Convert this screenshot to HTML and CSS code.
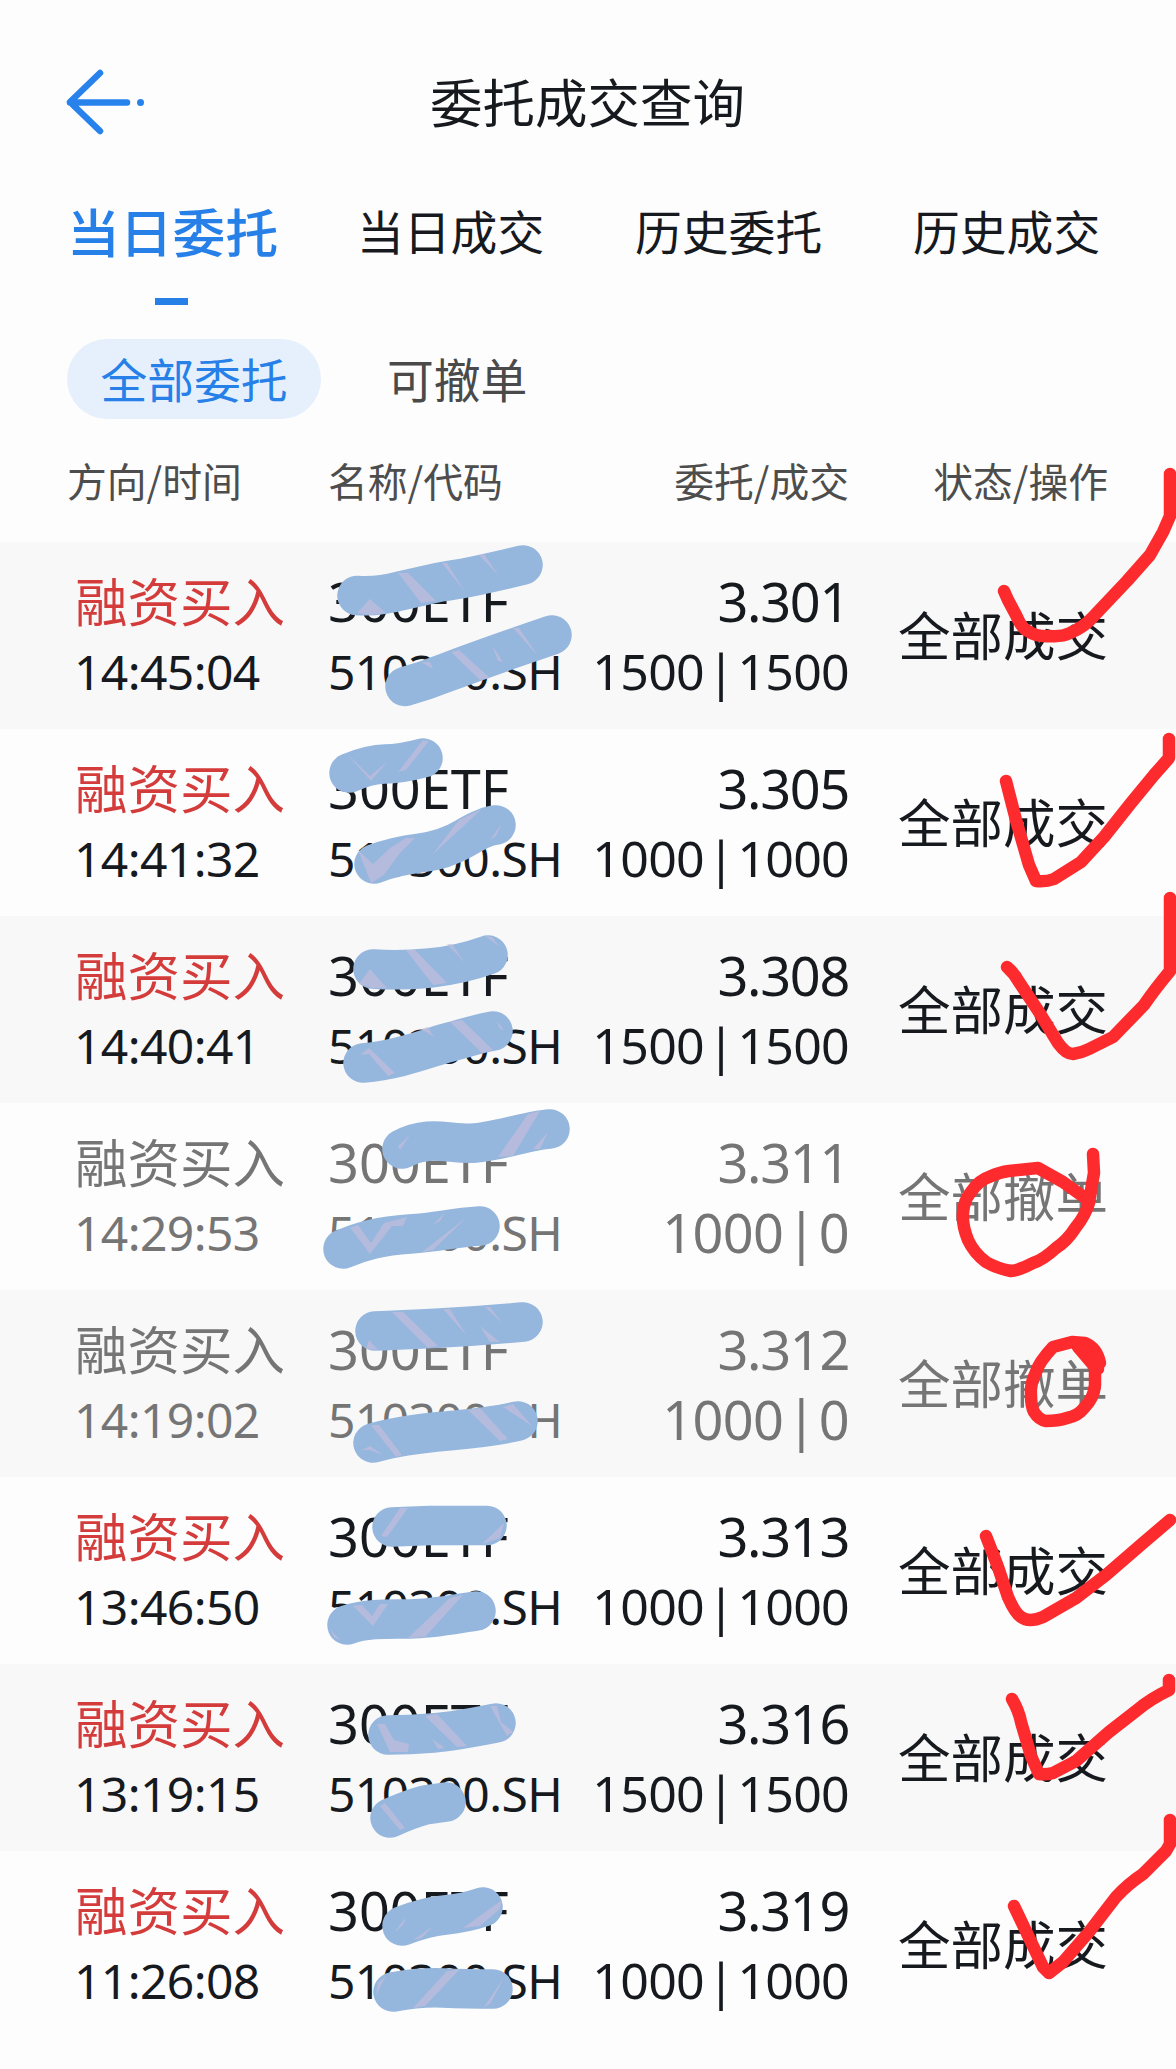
FILE: index.html
```html
<!DOCTYPE html>
<html lang="zh-CN">
<head>
<meta charset="utf-8">
<title>委托成交查询</title>
<link rel="stylesheet" href="styles.css">
</head>
<body>
<div class="screen">
  <header class="topbar">
    <svg class="back" width="84" height="72" viewBox="0 0 84 72">
      <path d="M38 7 8 36l30 29M8 36.500h57" fill="none" stroke="#2882ec" stroke-width="6.500" stroke-linecap="round" stroke-linejoin="round"/>
      <circle cx="78.500" cy="36.500" r="3.500" fill="#2882ec"/>
    </svg>
    <h1 class="title">委托成交查询</h1>
  </header>
  <nav class="tabs">
    <span class="tab active">当日委托</span>
    <span class="tab">当日成交</span>
    <span class="tab">历史委托</span>
    <span class="tab">历史成交</span>
  </nav>
  <div class="filters">
    <span class="pill">全部委托</span>
    <span class="filter">可撤单</span>
  </div>
  <div class="cols head">
    <span>方向/时间</span><span>名称/代码</span><span class="right">委托/成交</span><span class="right">状态/操作</span>
  </div>
  <main class="list">
    <section class="cols row">
      <div><div class="side">融资买入</div><div class="time">14:45:04</div></div>
      <div><div class="name">300ETF</div><div class="code">510300.SH</div></div>
      <div class="right"><div class="price">3.301</div><div class="qty">1500 | 1500</div></div>
      <div class="status">全部成交</div>
    </section>
    <section class="cols row">
      <div><div class="side">融资买入</div><div class="time">14:41:32</div></div>
      <div><div class="name">300ETF</div><div class="code">510300.SH</div></div>
      <div class="right"><div class="price">3.305</div><div class="qty">1000 | 1000</div></div>
      <div class="status">全部成交</div>
    </section>
    <section class="cols row">
      <div><div class="side">融资买入</div><div class="time">14:40:41</div></div>
      <div><div class="name">300ETF</div><div class="code">510300.SH</div></div>
      <div class="right"><div class="price">3.308</div><div class="qty">1500 | 1500</div></div>
      <div class="status">全部成交</div>
    </section>
    <section class="cols row cancelled">
      <div><div class="side">融资买入</div><div class="time">14:29:53</div></div>
      <div><div class="name">300ETF</div><div class="code">510300.SH</div></div>
      <div class="right"><div class="price">3.311</div><div class="qty">1000 | 0</div></div>
      <div class="status">全部撤单</div>
    </section>
    <section class="cols row cancelled">
      <div><div class="side">融资买入</div><div class="time">14:19:02</div></div>
      <div><div class="name">300ETF</div><div class="code">510300.SH</div></div>
      <div class="right"><div class="price">3.312</div><div class="qty">1000 | 0</div></div>
      <div class="status">全部撤单</div>
    </section>
    <section class="cols row">
      <div><div class="side">融资买入</div><div class="time">13:46:50</div></div>
      <div><div class="name">300ETF</div><div class="code">510300.SH</div></div>
      <div class="right"><div class="price">3.313</div><div class="qty">1000 | 1000</div></div>
      <div class="status">全部成交</div>
    </section>
    <section class="cols row">
      <div><div class="side">融资买入</div><div class="time">13:19:15</div></div>
      <div><div class="name">300ETF</div><div class="code">510300.SH</div></div>
      <div class="right"><div class="price">3.316</div><div class="qty">1500 | 1500</div></div>
      <div class="status">全部成交</div>
    </section>
    <section class="cols row">
      <div><div class="side">融资买入</div><div class="time">11:26:08</div></div>
      <div><div class="name">300ETF</div><div class="code">510300.SH</div></div>
      <div class="right"><div class="price">3.319</div><div class="qty">1000 | 1000</div></div>
      <div class="status">全部成交</div>
    </section>
  </main>

  <!-- Hand-drawn markup laid over the list -->
  <svg class="markup" width="1176" height="2069" viewBox="0 0 1176 2069">
    <g class="brush">
      <path d="M357 595.500Q378 597 400 591L440 582Q470 578 523 565"/>
      <path d="M405 686.500Q425 681 445 673Q490 656 552 635"/>
      <path d="M349 773Q370 764 385 764T423 758"/>
      <path d="M374 864Q395 856 420 853T465 838T496 825"/>
      <path d="M373 969Q400 971 430 968T488 955"/>
      <path d="M363 1063C400 1060 430 1047 450 1042S480 1033 493 1031"/>
      <path d="M402 1149C430 1134 450 1145 475 1143S530 1130 550 1129"/>
      <path d="M343 1249C362 1241 380 1236 410 1234S450 1228 480 1226"/>
      <path d="M375 1331Q400 1330 440 1328T523 1322"/>
      <path d="M373 1443Q400 1435 447 1431T518 1421"/>
      <path d="M392 1527 430 1525.500H487"/>
      <path d="M347 1625C365 1618 390 1619 410 1619S450 1615 476 1611"/>
      <path d="M388 1735Q410 1735 433 1733T496 1723"/>
      <path d="M390 1818Q410 1809 425 1805L446 1802"/>
      <path d="M402 1926Q425 1917 445 1915T483 1907"/>
      <path d="M393 1992Q420 1987 443 1988T493 1989"/>
    </g>
    <g class="sheen">
      <path d="M398 573 408 573 436 601 421 603ZM442 563 447 563 465 592ZM479 555 484 554 499 576ZM370 599 386 613 370 615 357 613Z"/>
      <path d="M451 652 459 650 490 678 480 680ZM513 628 519 628 538 656ZM492 645 503 662 498 661ZM421 662 433 669 430 662Z"/>
      <path d="M423 740 429 741 406 770 398 772ZM346 753 370 776 387 762 371 781Z"/>
      <path d="M406 838 415 838 400 853 384 875 371 883 358 850 373 864 390 848ZM459 820 482 809 432 855ZM502 823 490 840 496 836Z"/>
      <path d="M406 950 415 950 447 983 433 985ZM447 944 452 944 465 963ZM485 936 492 937 500 947ZM370 969 387 988 372 988 359 984Z"/>
      <path d="M450 1022 462 1020 493 1050 482 1053ZM360 1055 369 1048 395 1073 388 1076 369 1054ZM421 1029 434 1037 428 1027ZM496 1020 504 1030 500 1029Z"/>
      <path d="M528 1114 540 1111 513 1156 498 1157ZM548 1132 533 1149 540 1149ZM410 1135 398 1146 400 1150Z"/>
      <path d="M350 1228 358 1225 371 1243 384 1223 407 1217 403 1226 392 1226 370 1254 358 1238ZM467 1217 433 1250 422 1252ZM445 1212 433 1225 440 1221Z"/>
      <path d="M392 1312 403 1312 438 1346 428 1348ZM443 1309 450 1309 467 1336ZM485 1307 490 1307 502 1323ZM369 1340 378 1350 366 1349ZM480 1326 500 1342 490 1342Z"/>
      <path d="M468 1410 480 1408 508 1439 500 1441ZM371 1425 379 1425 402 1455 396 1457ZM503 1407 513 1404 532 1426ZM362 1450 370 1446 383 1455 370 1450Z"/>
      <path d="M400 1508 408 1508 387 1537 381 1536ZM504 1523 500 1538 482 1544Z"/>
      <path d="M353 1606 362 1605 372 1616 380 1604 388 1604 373 1626ZM450 1598 463 1595 425 1637 408 1638ZM330 1629 340 1640 334 1637Z"/>
      <path d="M377 1724 385 1724 394 1740 409 1744 408 1752 390 1752ZM425 1716 437 1714 467 1746 457 1747ZM490 1706 497 1706 501 1722 513 1732 507 1736ZM432 1739 445 1748 438 1749Z"/>
      <path d="M380 1806 385 1803 405 1828 400 1830Z"/>
      <path d="M502 1900 500 1909 480 1926 463 1928ZM433 1926 413 1940 422 1938ZM406 1917 394 1933 403 1925Z"/>
      <path d="M447 1971 460 1969 425 2006 413 2008ZM505 1976 484 2007 490 2004ZM378 1983 386 1976 376 1995Z"/>
    </g>
    <g class="pen">
      <path d="M1004 591 1008 600 1016 615Q1022 629 1028 631Q1036 637 1050 636Q1062 637 1070 633Q1084 627 1092 618L1127 581 1150 555 1163 532 1170 516V474"/>
      <path d="M1006 781 1016 820 1029 865 1036 881Q1046 882 1054 879L1081 862 1104 837 1131 803 1154 775 1169 758V739"/>
      <path d="M1007 967Q1014 973 1019 982L1039 1012 1058 1043Q1066 1054 1073 1054Q1081 1053 1089 1049L1113 1037 1144 1005Q1155 989 1170 971V898"/>
      <path d="M1093 1154 1094 1173Q1091 1190 1089 1203Q1085 1216 1076 1227Q1067 1241 1056 1248Q1043 1260 1033 1263Q1020 1270 1011 1271Q996 1268 986 1262Q974 1253 968 1240Q962 1225 963 1213Q964 1200 971 1192Q979 1180 989 1177Q1000 1172 1009 1171L1038 1168 1063 1182 1088 1200"/>
      <path d="M1100 1363Q1097 1348 1085 1343L1072 1342 1053 1347Q1039 1362 1036 1372Q1030 1384 1031 1395Q1031 1406 1034 1412Q1039 1420 1046 1421Q1058 1421 1067 1418Q1078 1416 1084 1408Q1094 1398 1095 1385V1367L1078 1347 1090 1351 1098 1369"/>
      <path d="M986 1536 998 1567 1008 1597Q1015 1613 1021 1617Q1029 1623 1043 1617L1076 1598 1106 1575 1143 1543 1170 1520"/>
      <path d="M1012 1699Q1019 1711 1021 1722L1031 1756 1039 1774Q1046 1775 1053 1773L1076 1761 1109 1732 1136 1711Q1150 1699 1169 1690V1680"/>
      <path d="M1014 1906 1033 1946 1043 1967 1049 1973 1063 1962 1089 1932 1116 1897Q1128 1884 1143 1874L1166 1851 1170 1844V1820"/>
    </g>
  </svg>
</div>
</body>
</html>
```
FILE: styles.css
```css
* { box-sizing: border-box; }

body {
  margin: 0;
  background: #fdfdfd;
  color: #16191d;
  font-family: "Noto Sans CJK SC", sans-serif;
}

.screen {
  position: relative;
  width: 1176px;
  height: 2069px;
  overflow: hidden;
}

.topbar {
  display: flex;
  align-items: flex-start;
  height: 154px;
  padding: 66px 64px 0 62px;
}

.back { flex: none; }

.title {
  flex: 1;
  margin: 0;
  padding: 4px 83px 0 0;
  font-size: 52.5px;
  font-weight: 400;
  line-height: 60px;
  text-align: center;
  white-space: nowrap;
}

.tabs {
  display: grid;
  grid-template-columns: 290px 278px 278px 1fr;
  height: 151px;
  padding: 41px 0 0 67px;
  font-size: 46.8px;
  line-height: 70px;
  white-space: nowrap;
}

.active {
  display: flex;
  flex-direction: column;
  color: #2680e8;
  font-size: 52.8px;
  font-weight: 500;
}

.active::after {
  content: "";
  width: 33px;
  height: 7px;
  margin: 33px 0 0 88px;
  background: #2680e8;
}

.filters {
  display: flex;
  align-items: center;
  gap: 66px;
  height: 148px;
  padding: 0 67px;
  font-size: 46.8px;
  color: #4a4a4a;
}

.pill {
  width: 254px;
  height: 80px;
  border-radius: 40px;
  background: #e5f0fc;
  color: #2680e8;
  line-height: 77px;
  text-align: center;
}

.filter { line-height: 80px; padding-bottom: 2px; }

.cols {
  display: grid;
  grid-template-columns: 261px 235px 286px 259px;
  white-space: nowrap;
}

.head {
  height: 89px;
  padding: 0 0 0 67px;
  color: #4d4d4d;
  font-size: 39.8px;
  line-height: 53px;
}

.right { text-align: right; }

.row {
  height: 187px;
  padding: 25px 0 0 67px;
}

.row:nth-child(odd) { background: #f8f8f8; }

.side {
  padding-left: 8px;
  color: #d43c3c;
  font-size: 52.5px;
  line-height: 64px;
}

.time, .name, .code, .price, .qty { font-family: "Noto Sans", sans-serif; }

.time {
  padding-left: 7px;
  font-size: 48px;
  letter-spacing: -0.6px;
  line-height: 81px;
}

.name {
  font-size: 54px;
  line-height: 68px;
}

.code {
  font-size: 48px;
  letter-spacing: -0.6px;
  line-height: 73px;
}

.price {
  font-size: 54px;
  letter-spacing: -1.3px;
  line-height: 68px;
}

.qty {
  font-size: 50px;
  letter-spacing: -0.7px;
  word-spacing: -9px;
  line-height: 73px;
}

.status {
  font-size: 52.5px;
  line-height: 132px;
  text-align: right;
}

.cancelled, .cancelled .side { color: #757575; }

.cancelled .qty { font-size: 54px; word-spacing: -10px; }

.markup {
  position: absolute;
  top: 0;
  left: 0;
}

.brush {
  fill: none;
  stroke: #95b6dd;
  stroke-width: 39.5;
  stroke-linecap: round;
  stroke-linejoin: round;
}

.sheen {
  fill: #c7bfde;
  opacity: 0.65;
}

.pen {
  fill: none;
  stroke: #fd2b2e;
  stroke-width: 12.5;
  stroke-linecap: round;
  stroke-linejoin: round;
}
```
